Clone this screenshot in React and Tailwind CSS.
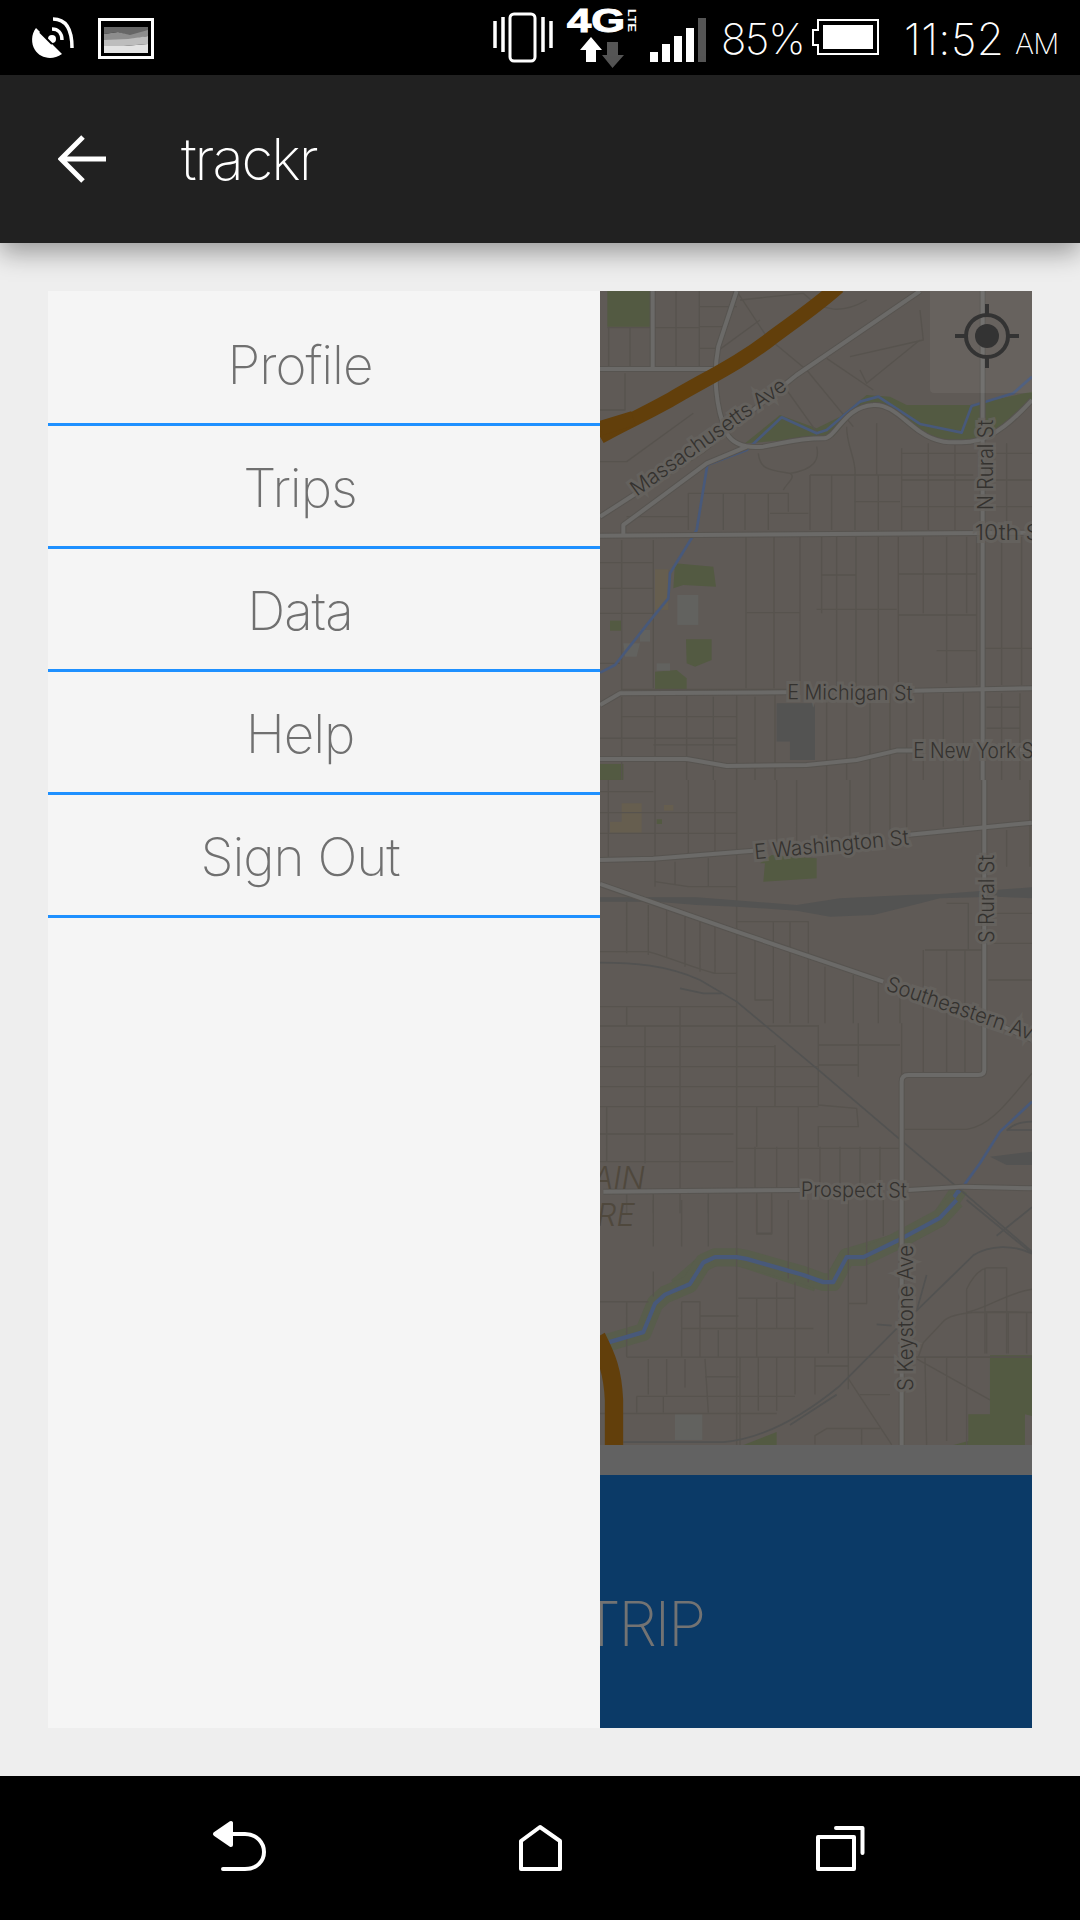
import React from 'react';

const SANS = 'font-[Inter,sans-serif]';

const menuItems = ['Profile', 'Trips', 'Data', 'Help', 'Sign Out'];

// Map layers, traced in three sections of the map
const sections = [
  {
    transform: 'translate(590 280) scale(0.3333)',
    parks: [
      'M52 33H182V140H52Z',
      'M465 490L570 405L680 445L750 410L830 345L900 350L950 375L1140 375L1326 335V360L1230 450L1150 485L1060 490L960 440L880 375L800 390L730 470L600 480Z',
      'M255 850L370 860L378 920L280 915L250 925Z',
      'M60 1022H95V1052H60Z',
      'M288 1078H365V1140L315 1160L290 1150Z',
      'M195 1175L260 1170L290 1195V1228H195Z',
      'M30 1452H100V1500H30Z',
    ],
    tan: ['M195 868H235V990H195Z'],
    gray: ['M262 945H325V1035H262Z', 'M200 1150H240V1172H200Z', 'M100 1090H150L140 1130H105Z', 'M150 1050H180V1085H150Z'],
    dark: ['M560 1270H675V1440H600V1385H560Z'],
    minor: [
      'M56 140V260M120 145V260M258 33V265M328 33V260M52 143H330M330 80H440M330 140H400M330 205H385',
      'M105 280V390H30M30 545H110L310 400M440 33L530 170M380 215L510 120M450 60L640 40M640 40C700 100 760 100 830 60',
      'M780 230L1000 180L990 90M810 270L830 310L990 180M650 270L790 440M710 235L850 330M590 330L690 470M530 170L650 270',
      'M95 780V1230M190 780V1225M468 770V1225M552 770V1225M630 770V1225M695 770V1000M740 770V1225M798 770V1225M865 770V1220M925 770V1220M1000 770V1000M1070 770V1210M1130 770V1000M1160 770V1215M1235 770V1215M1295 770V1215',
      'M30 848H190M30 925H190M30 1000H190M470 998H630M695 885H798M680 988H920M925 882H1160M925 1005H1160M1040 1112H1160M1180 1105H1326M30 1150H90M95 1228H590',
      'M295 640H595V695M540 700H655M400 640V750M465 640V750M535 640V750M295 710H110M295 640V750M660 585V750M725 585V750M795 585V750M865 585V750M935 505V750M1015 490V750M1095 490V750',
      'M660 585H1150M795 665H930M935 520H1160M935 600H1160M935 680H1326M1250 490V750M1180 520H1326M1180 600H1326M1180 680H1326',
      'M505 520C510 570 540 570 600 580C620 590 590 610 580 630M680 500C690 540 670 570 600 580M770 440C770 500 800 540 795 585M860 430V585',
      'M95 1250V1500M195 1240V1500M290 1240V1500M370 1250V1500M440 1240V1500M495 1250V1500M555 1240V1500M710 1240V1500M770 1240V1500M840 1240V1500M900 1240V1500M950 1240V1500M1000 1240V1500M1060 1240V1500M1120 1240V1500M1235 1240V1500M1290 1240V1500',
      'M95 1310H440M30 1375H440M190 1395H440M1190 1282H1290M1190 1345H1290',
    ],
    rail: [],
    major: [
      'M30 710L340 510L620 285L990 33',
      'M100 765V735L350 550L470 500',
      'M440 33L385 200C370 280 375 380 410 460C430 495 470 505 520 500C580 490 620 475 700 475C740 475 760 380 850 375C900 370 940 420 990 455C1040 490 1080 490 1140 485C1210 480 1280 410 1326 360',
      'M1178 33V1500',
      'M30 767L1326 758',
      'M30 1275L90 1240L590 1237M970 1232L1326 1225',
      'M30 1437H290L410 1458L650 1455L800 1440L920 1412H970M1290 1410H1326',
      'M30 267H370M188 33V262',
    ],
    water: ['M30 1178L75 1155L190 1010L235 955L240 880L320 750L352 555L470 510L575 412L680 460L710 450L810 365L865 350L990 432L1115 458L1145 378L1270 340L1326 290'],
    bank: [],
    highway: ['M30 470C100 430 130 420 240 360C340 300 450 250 550 170C620 120 690 70 745 20', 'M30 445L130 415'],
    highwayWidth: 44,
  },
  {
    transform: 'translate(590 780) scale(0.3333)',
    parks: ['M545 225L680 235V295L520 305L525 250L510 250Z', 'M200 118H216V132H200Z'],
    tan: ['M60 125H95V70H155V158H60Z', 'M222 75H250V92H222Z'],
    gray: [],
    dark: ['M30 352H320L620 375L750 355L950 345L1050 342L1326 322V355L1220 350L1050 355L950 380L850 405L720 410L620 392L440 380L320 375L200 365L30 365Z', 'M1200 1130L1326 1115V1155L1250 1155Z'],
    minor: [
      'M55 0V230M195 0V320M295 0V230M375 0V230M440 0V1260M560 0V210M620 0V200M710 0V190M780 0V180M840 0V170M900 0V165M950 0V160M1060 0V140M1120 0V135M1250 150V260M1320 0V260',
      'M30 35H190M30 98H440M30 160H440M255 245V315M355 235V320M195 305L295 320H440',
      'M1070 370H1135V510M1005 510H1180V880M1000 510V880M1070 510V880M1125 510V880M1200 400H1326M1200 490H1326M1195 600H1326',
      'M110 365V520M175 375V525M230 390V535M285 410V560M330 425V575M375 440V580H440M30 515H175C230 530 330 570 375 580',
      'M440 425H655V510M550 425V730M600 425V730M495 480V660H550M655 510V730M705 560V730M790 585V730M865 605V730M930 620V730',
      'M30 680H440M110 680V735M30 738H685M30 800H555M30 860H685M30 920H685M30 980H685M165 738V1150M270 680V1230M555 795V980M685 735V975L800 985L805 1040H685V1100M685 795H930M685 855H805M805 730V890M935 730V890M625 980V1100M500 980V1100M440 1105H930M495 1100V1230M560 1100V1230M625 1100V1230M690 1100V1230M750 1100V1230M810 1100V1230M870 1100V1230M30 1062H430M30 1145H430M50 980V1145M945 1048H1130C1200 1040 1250 970 1326 880',
      'M190 1240V1300M270 1240V1300M355 1240V1300M500 1240V1360H545V1240M110 1240V1300',
    ],
    rail: [
      'M30 548C130 548 230 555 330 600L440 665L680 865L920 1070L1100 1220L1326 1415',
      'M270 625L340 640H395',
      'M1250 1052C1270 1030 1300 1025 1326 1025M1326 1050H1250',
    ],
    major: [
      'M30 240L190 236L490 212M950 165L1326 128',
      'M1183 0V870Q1183 885 1165 885H955Q935 885 935 905V1260',
      'M30 312L440 455L880 605M1240 740L1326 780',
      'M40 1235L630 1230M955 1230L1120 1220L1326 1225',
    ],
    bank: ['M1110 1225L1050 1315L920 1385L770 1430L735 1490M260 1520L340 1450L370 1435H450L680 1510'],
    water: ['M1326 965L1230 1055L1170 1150L1130 1205L1105 1240'],
    highway: [],
    highwayWidth: 44,
  },
  {
    transform: 'translate(590 1200) scale(0.3333 0.3571)',
    parks: ['M1200 435H1326V605L1305 600V690H1075L1135 675V600H1200Z', 'M450 690L560 650V690Z'],
    tan: [],
    gray: ['M255 600H337V672H255Z'],
    dark: [],
    minor: [
      'M190 0V130M275 0V130M355 0V130M440 0V690M500 0V95H545V0M595 0V220M655 0V230M715 0V430M775 0V530M830 0V290H775M880 0V100',
      'M30 285H175M190 200V270M110 285V440M275 285H330V360M330 325H445M275 360H670M275 285V440M330 360V440M385 365V440M560 230V360M615 230V440M500 275V440M445 275H615M110 440H1326',
      'M175 445V545M230 445V545M285 445V525M345 445L355 595M345 495H445M505 440V590M560 440V590M615 440V545M140 550H615M140 550V595M220 550V595M30 598H560M450 440V690M675 440V545M675 465H775',
      'M775 500L905 685M810 545H900M675 685V660L710 640H870M815 640V685',
      'M975 440H1326M1130 690V250C1150 210 1170 195 1190 190H1250V430M1185 190V430M1130 315H1326C1200 310 1090 310 1060 340L1000 400L985 440M1190 315V430M1255 315V430M1005 440L1010 690M1070 440V675M1310 315V430M1200 560L980 445',
      'M1326 250C1250 260 1200 300 1130 315',
    ],
    rail: [
      'M100 678H400C500 670 620 620 750 520L920 360',
      'M1326 150C1270 125 1200 125 1150 155L980 310L1010 210',
      'M860 348L905 352M600 630L740 545',
      'M1130 0L1326 150M1326 20L1220 100',
    ],
    major: ['M935 0V690'],
    bank: ['M1100 0L1050 50L920 115L820 160H770L730 230H700L640 210L470 165L440 160H375L340 175L300 235L225 265L195 290L160 370L50 400L30 405'],
    water: [],
    highway: ['M20 385C50 440 68 480 72 560V700'],
    highwayWidth: 55,
  },
];

// Labels in page coordinates
const labels = [
  { text: 'Massachusetts Ave', x: 636.7, y: 496.7, r: -35.5, len: 186 },
  { text: 'N Rural St', x: 992.7, y: 510, r: -90, len: 90 },
  { text: '10th St', x: 975, y: 540, r: 0, len: 72 },
  { text: 'E Michigan St', x: 787.3, y: 699.3, r: 0.5, len: 125 },
  { text: 'E New York St', x: 913.3, y: 758.3, r: 0, len: 126 },
  { text: 'E Washington St', x: 755, y: 859.3, r: -5.5, len: 155 },
  { text: 'S Rural St', x: 994, y: 943, r: -90, len: 88 },
  { text: 'Southeastern Ave', x: 885, y: 990, r: 19, len: 165 },
  { text: 'Prospect St', x: 800.7, y: 1196.7, r: 0.5, len: 106 },
  { text: 'S Keystone Ave', x: 912.7, y: 1391, r: -90, len: 146 },
];

function MapSection({ s }) {
  return (
    <g transform={s.transform} fill="none" strokeLinejoin="round">
      {s.parks.map((d, i) => <path key={i} d={d} fill="#535a42" />)}
      {s.tan.map((d, i) => <path key={i} d={d} fill="#665e4f" />)}
      {s.gray.map((d, i) => <path key={i} d={d} fill="#62625f" />)}
      {s.bank.map((d, i) => <path key={i} d={d} stroke="#585d4c" strokeWidth="50" />)}
      {s.minor.map((d, i) => <path key={i} d={d} stroke="#57534e" strokeWidth="4" />)}
      {s.bank.map((d, i) => <path key={i} d={d} stroke="#48597a" strokeWidth="12" />)}
      {s.water.map((d, i) => <path key={i} d={d} stroke="#48597a" strokeWidth="8" />)}
      {s.dark.map((d, i) => <path key={i} d={d} fill="#535352" />)}
      {s.rail.map((d, i) => <path key={i} d={d} stroke="#525251" strokeWidth="5" />)}
      {s.major.map((d, i) => <path key={i} d={d} stroke="#575450" strokeWidth="18" />)}
      {s.major.map((d, i) => <path key={i} d={d} stroke="#6b6a68" strokeWidth="12" />)}
      {s.highway.map((d, i) => <path key={i} d={d} stroke="#623f0b" strokeWidth={s.highwayWidth} />)}
    </g>
  );
}

function MapView() {
  return (
    <svg viewBox="600 291 432 1154" className="block w-[432px] h-[1154px] shrink-0 bg-[#5f5a56]">
      {sections.map((s, i) => <MapSection key={i} s={s} />)}
      <g fontFamily="Inter, sans-serif" fontWeight="300">
        {labels.map((l) => (
          <text
            key={l.text}
            transform={`translate(${l.x} ${l.y}) rotate(${l.r})`}
            fontSize="21"
            fill="#34322f"
            stroke="#66635f"
            strokeWidth="6"
            strokeOpacity="0.8"
            paintOrder="stroke"
            textLength={l.len}
            lengthAdjust="spacingAndGlyphs"
          >
            {l.text}
          </text>
        ))}
        <text x="645" y="1189" textAnchor="end" fontSize="31" fontStyle="italic" fill="#4f483d">AIN</text>
        <text x="635" y="1226" textAnchor="end" fontSize="31" fontStyle="italic" fill="#4f483d">RE</text>
      </g>
      {/* my location button */}
      <path d="M930 291H1032V393H934Q930 393 930 389Z" fill="#fff" fillOpacity="0.05" />
      <g fill="none" stroke="#333" strokeWidth="4">
        <circle cx="987" cy="336" r="21" />
        <path d="M987 304V316M987 356V368M955 336H967M1007 336H1019" />
      </g>
      <circle cx="987" cy="336" r="12" fill="#333" />
    </svg>
  );
}

function StatusIcons() {
  return (
    <svg viewBox="0 0 1080 75" className="absolute inset-0 w-[1080px] h-[75px]">
      {/* satellite dish */}
      <path d="M36 28L62 54C52 61 40 58 35 50C31 44 31 34 36 28Z" fill="#fff" />
      <circle cx="52" cy="39" r="4" fill="#fff" />
      <g fill="none" stroke="#fff" strokeWidth="3.5">
        <path d="M52 29C58 29 62 33 62 40" />
        <path d="M53 19C65 19 72 28 72 48" />
      </g>
      <path d="M40 32L52 44" stroke="#000" strokeWidth="2" />
      {/* image notification */}
      <rect x="99.5" y="19.5" width="53" height="38" fill="#000" stroke="#fff" strokeWidth="3" />
      <rect x="104" y="24" width="44" height="29" fill="#000" />
      <path d="M104 27H148V31L130 36L118 32L104 34Z" fill="#666" />
      <path d="M104 34L118 32L130 35L148 30V36L128 40L104 40Z" fill="#8d8d8d" />
      <path d="M104 40L128 39L148 36V44L124 46L104 46Z" fill="#bdbdbd" />
      <path d="M104 46L124 46L148 44V53H104Z" fill="#e3e3e3" />
      {/* vibrate */}
      <rect x="510" y="14" width="25" height="47" rx="4" fill="none" stroke="#fff" strokeWidth="3" />
      <path d="M495 21V48M503 17V52M543 17V52M551 21V48" stroke="#fff" strokeWidth="3.5" fill="none" />
      {/* 4G LTE */}
      <text x="567" y="32" fontFamily="'Liberation Sans', sans-serif" fontWeight="700" fontSize="33" fill="#fff" stroke="#fff" strokeWidth="1" textLength="58" lengthAdjust="spacingAndGlyphs">4G</text>
      <text transform="translate(628 9) rotate(90)" fontFamily="'Liberation Sans', sans-serif" fontWeight="700" fontSize="11" fill="#fff" textLength="23" lengthAdjust="spacingAndGlyphs">LTE</text>
      <path d="M591 37L602 50H596V62H586V50H580Z" fill="#fff" />
      <path d="M607 42H618V55H624L612.5 68L602 55H607Z" fill="#555" />
      {/* signal */}
      <rect x="650" y="52" width="8" height="10" fill="#fff" />
      <rect x="662" y="44" width="8" height="18" fill="#fff" />
      <rect x="674" y="36" width="8" height="26" fill="#fff" />
      <rect x="686" y="28" width="8" height="34" fill="#fff" />
      <rect x="698" y="18" width="8" height="44" fill="#555" />
      {/* battery */}
      <path d="M818 20H878V54H818V45H813V30H818Z" fill="none" stroke="#fff" strokeWidth="2" />
      <rect x="823" y="25" width="50" height="24" fill="#fff" />
    </svg>
  );
}

export default function App() {
  return (
    <div className={`w-[1080px] h-[1920px] flex flex-col bg-[#eeeeee] overflow-hidden ${SANS}`}>
      {/* Status bar */}
      <div className="relative h-[75px] shrink-0 bg-black text-white font-extralight">
        <StatusIcons />
        <span className="absolute left-[721px] top-[14px] text-[42px] leading-[50px] tracking-[-0.03em]">85%</span>
        <span className="absolute left-[904px] top-[14px] text-[44px] leading-[50px] tracking-[0.01em]">11:52</span>
        <span className="absolute left-[1015px] top-[26px] text-[29px] leading-[36px] tracking-[-0.03em]">AM</span>
      </div>

      {/* Header */}
      <div className="relative z-10 h-[168px] shrink-0 flex items-center bg-[#212121] shadow-[0_10px_24px_rgba(0,0,0,0.35)]">
        <svg viewBox="0 0 48 48" className="ml-[58px] w-[48px] h-[48px]" fill="none" stroke="#fff" strokeWidth="5">
          <path d="M48 24H4M25 2L3 24L25 46" />
        </svg>
        <span className="ml-[75px] text-[58px] leading-[68px] text-white font-extralight tracking-[-0.035em]">trackr</span>
      </div>

      {/* Card */}
      <div className="flex-1 p-12 flex flex-col">
        <div className="flex-1 flex overflow-hidden">
          <div className="w-[552px] shrink-0 pt-3 bg-[#f5f5f5]">
            {menuItems.map((item) => (
              <div key={item} className="pr-12 pt-[5px] h-[123px] flex items-center justify-center border-b-[3px] border-[#1e90ff] text-[53px] tracking-[-0.02em] text-[#707070] font-extralight">
                {item}
              </div>
            ))}
          </div>
          <div className="flex-1 flex flex-col overflow-hidden bg-[#626262]">
            <MapView />
            <div className="mt-[30px] flex-1 bg-[#0b3a67] pt-[113px] -indent-[18px] text-[62px] leading-[72px] tracking-[-0.04em] text-[#737373] font-extralight whitespace-nowrap overflow-hidden">
              TRIP
            </div>
          </div>
        </div>
      </div>

      {/* Nav bar */}
      <div className="h-[144px] shrink-0 bg-black">
        <svg viewBox="0 1776 1080 144" className="block w-[1080px] h-[144px]" fill="none" stroke="#fff" strokeWidth="4" strokeLinejoin="round" strokeLinecap="round">
          <path d="M215 1834L231 1823V1845Z" fill="#fff" />
          <path d="M231 1834H245C257 1834 264 1843 264 1852C264 1861 257 1869 245 1869H223" />
          <path d="M521 1869V1841L540 1827L560 1841V1869Z" />
          <path d="M818 1837H854V1869H818Z" />
          <path d="M836 1828H862.5V1853" />
        </svg>
      </div>
    </div>
  );
}
